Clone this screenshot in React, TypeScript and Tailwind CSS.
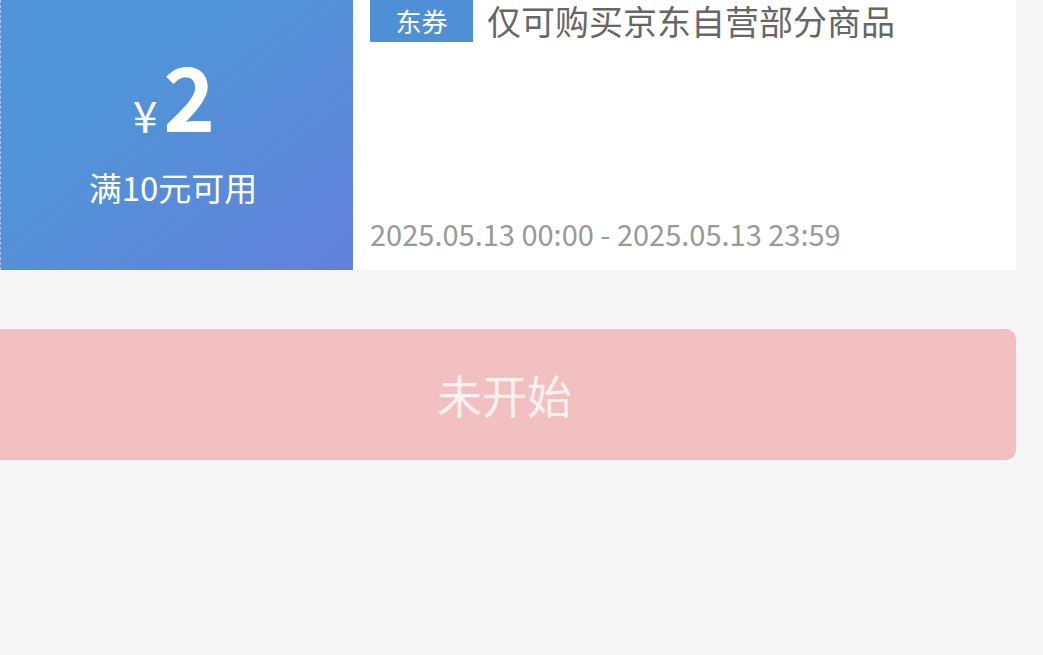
const font = { fontFamily: '"Noto Sans CJK SC", "Noto Sans", sans-serif' };

export default function App() {
  return (
    <div className="min-h-[655px] w-[1043px] overflow-hidden bg-[#f6f6f6]" style={font}>
      <div className="mr-[27px] flex h-[270px]">
        <div className="flex w-[353px] shrink-0 flex-col items-center justify-center border-l border-dashed border-white/50 bg-linear-to-br from-[#4f95d8] from-30% to-[#6280db] pb-[16px] pr-[8px] text-white">
          <div className="flex items-end leading-none">
            <span className="mb-[2px] mr-[6px] text-[44px] leading-none">¥</span>
            <span className="text-[88px] font-bold leading-none tracking-tight">2</span>
          </div>
          <div className="mt-[33px] text-[33px] leading-none">满10元可用</div>
        </div>
        <div className="flex flex-1 flex-col justify-between bg-white pb-[22px] pl-[17px] pt-[1px]">
          <div className="flex items-start">
            <span className="-mt-[1px] flex h-[42px] w-[103px] items-center justify-center bg-[#4f8fd6] text-[26px] leading-none text-white">东券</span>
            <span className="ml-[14px] text-[34px] leading-[40px] text-[#666666]">仅可购买京东自营部分商品</span>
          </div>
          <div className="text-[29px] leading-none text-[#999999]">2025.05.13 00:00 - 2025.05.13 23:59</div>
        </div>
      </div>
      <div className="-ml-[10px] mr-[27px] mt-[59px] flex h-[131px] items-center justify-center rounded-[10px] bg-[#f2c0c0] pl-[3px] text-[45px] text-[#fdf2f2]">
        未开始
      </div>
    </div>
  );
}
